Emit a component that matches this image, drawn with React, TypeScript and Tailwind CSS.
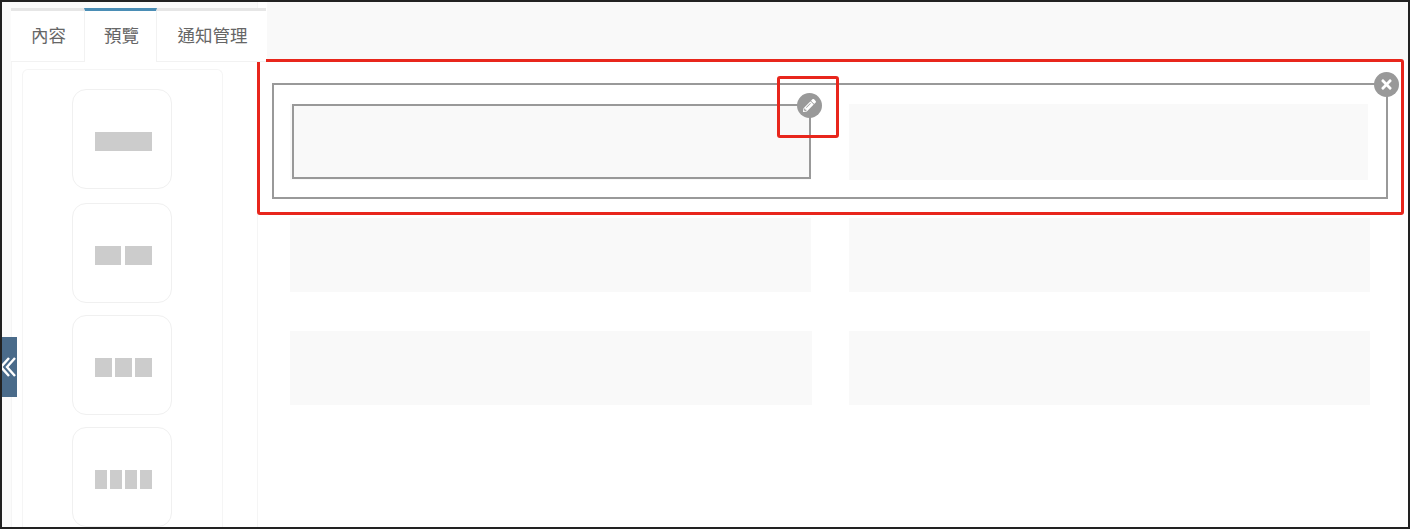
import { FaPencilAlt, FaTimes } from "react-icons/fa";

const tiles = [
  ["w-[57px]"],
  ["w-[26px]", "w-[27px]"],
  ["w-[17px]", "w-[17px]", "w-[17px]"],
  ["w-3", "w-3", "w-3", "w-3"],
];

const gapClasses = ["gap-0", "gap-1", "gap-[3px]", "gap-[3px]"];

const Tab = ({ label, active, width }: { label: string; active?: boolean; width: string }) => (
  <div
    className={`flex h-[54px] items-center justify-center border-t-[3px] pb-[2px] pl-[2px] text-[17.5px] text-[#666] ${width} ${
      active ? "border-t-[#4a8db5] border-x border-x-[#f2f2f2] bg-white" : "border-t-[#e6e6e6] border-b border-b-[#f2f2f2] bg-white"
    }`}
  >
    {label}
  </div>
);

const Tile = ({ bars, gap, className }: { bars: string[]; gap: string; className?: string }) => (
  <div className={`flex size-[100px] shrink-0 items-center justify-center rounded-[14px] border border-[#f0f0f0] bg-white pl-[2px] pt-[4px] ${className ?? ""}`}>
    <div className={`flex ${gap}`}>
      {bars.map((w, i) => (
        <div key={i} className={`h-[19px] bg-[#cccccc] ${w}`} />
      ))}
    </div>
  </div>
);

const Block = ({ width, height }: { width: string; height: string }) => <div className={`bg-[#f9f9f9] ${width} ${height}`} />;

export default function App() {
  return (
    <div
      className="relative flex h-[529px] w-[1410px] overflow-hidden border-2 border-[#222] bg-white"
      style={{ fontFamily: '"Noto Sans CJK TC", "Liberation Sans", sans-serif' }}
    >
      <aside className="relative flex w-[256px] shrink-0 flex-col border-r border-[#f5f5f5] bg-[#fbfbfb] pl-[9px] pt-[6px]">
        <div className="relative z-10 flex w-[255px]">
          <Tab label="內容" width="w-[73px]" />
          <Tab label="預覽" width="w-[73px]" active />
          <Tab label="通知管理" width="w-[109px]" />
        </div>
        <div className="flex min-h-0 flex-1 border-l border-[#f5f5f5] bg-white pl-[10px] pt-[7px]">
          <div className="flex w-[201px] flex-col items-center gap-3 rounded-t-md border-x border-t border-[#f5f5f5] pr-[1px] pt-[19px]">
            {tiles.map((bars, i) => (
              <Tile key={i} bars={bars} gap={gapClasses[i]} className={i === 0 ? "mb-[2px]" : ""} />
            ))}
          </div>
        </div>
        <div className="absolute left-0 top-[335px] flex h-[60px] w-[15px] items-center justify-center overflow-hidden bg-[#4a6b8a]">
          <svg width="15" height="20" viewBox="0 0 15 20" fill="none" stroke="#fff" strokeWidth="2.4">
            <path d="M7 1 L-1 10 L7 19" />
            <path d="M13 1 L5 10 L13 19" />
          </svg>
        </div>
      </aside>

      <main className="flex min-w-0 flex-1 flex-col">
        <div className="ml-[9px] h-[58px] bg-[#f9f9f9]" />
        <div className="flex flex-col pl-[32px] pt-[44px]">
          <div className="flex gap-[38px]">
            <Block width="w-[521px]" height="h-[76px]" />
            <Block width="w-[519px]" height="h-[76px]" />
          </div>
          <div className="mt-[38px] flex gap-[38px]">
            <Block width="w-[521px]" height="h-[74px]" />
            <Block width="w-[521px]" height="h-[74px]" />
          </div>
          <div className="mt-[39px] flex gap-[37px]">
            <Block width="w-[522px]" height="h-[74px]" />
            <Block width="w-[521px]" height="h-[74px]" />
          </div>
        </div>
      </main>

      {/* selected row and column outlines */}
      <div className="absolute left-[270px] top-[81px] h-[116px] w-[1116px] border-2 border-[#999]" />
      <div className="absolute left-[290px] top-[102px] h-[75px] w-[519px] border-2 border-[#999]" />
      <div className="absolute left-[795px] top-[91px] flex size-[25px] items-center justify-center rounded-full bg-[#999] text-white">
        <FaPencilAlt size={13} />
      </div>
      <div className="absolute left-[1372px] top-[70px] flex size-[25px] items-center justify-center rounded-full bg-[#999] text-white">
        <FaTimes size={15} />
      </div>

      {/* red annotation boxes */}
      <div className="absolute left-[255px] top-[57px] h-[156px] w-[1147px] rounded-[3px] border-[3px] border-[#e8261c]" />
      <div className="absolute left-[775px] top-[74px] h-[62px] w-[62px] rounded-[3px] border-[3px] border-[#e8261c]" />
    </div>
  );
}
